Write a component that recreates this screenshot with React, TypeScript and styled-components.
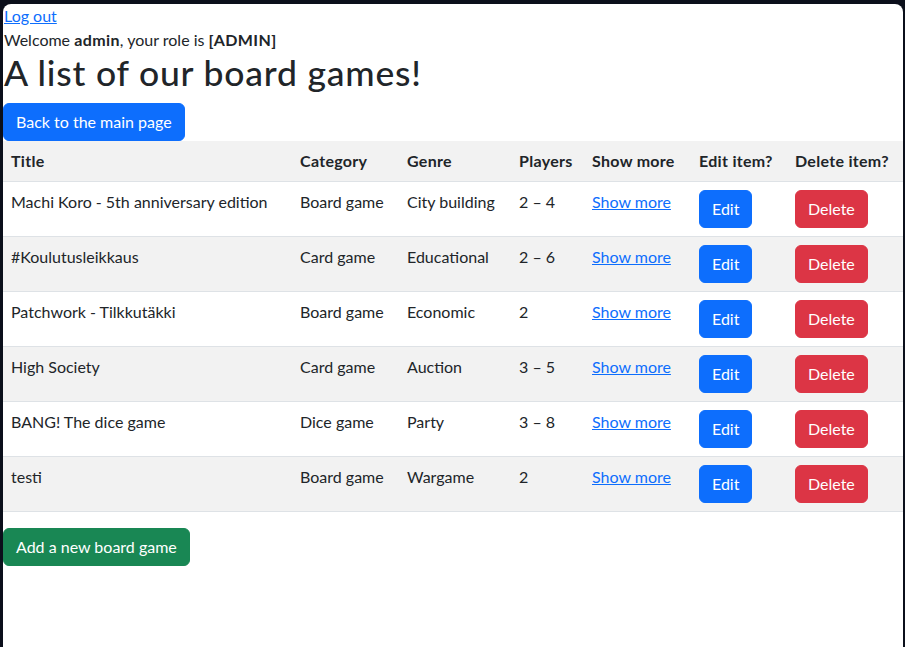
import React from "react";
import styled, { createGlobalStyle } from "styled-components";

const Global = createGlobalStyle`
  html, body { margin: 0; padding: 0; background: #0b0f1b; }
  body {
    font-family: Lato, "Noto Sans", sans-serif;
    font-size: 16px;
    line-height: 1.5;
    color: #212529;
  }
  * { box-sizing: border-box; }
`;

const Frame = styled.div`
  margin: 4px 2px 0 3px;
  min-height: 643px;
  background: #ffffff;
  border-radius: 8px 8px 0 0;
  overflow: hidden;
`;

const Top = styled.div`
  padding-left: 1px;
`;

const Link = styled.a`
  color: #0d6efd;
  text-decoration: underline;
  cursor: pointer;
`;

const Line = styled.div`
  margin: 0;
`;

const Strong = styled.b`
  font-weight: 700;
  letter-spacing: 0.4px;
`;

const Title = styled.h1`
  margin: 0 0 8px;
  font-size: 35.5px;
  font-weight: 500;
  line-height: 1.2;
  letter-spacing: 0.8px;
`;

const Button = styled.button<{ $variant: "primary" | "danger" | "success" }>`
  display: inline-block;
  font-family: inherit;
  font-size: 16px;
  line-height: 1.5;
  padding: 6px 12px;
  border: 1px solid transparent;
  border-radius: 6px;
  color: #fff;
  cursor: pointer;
  background: ${(p) =>
    p.$variant === "primary" ? "#0d6efd" : p.$variant === "danger" ? "#dc3545" : "#198754"};
  border-color: ${(p) =>
    p.$variant === "primary" ? "#0d6efd" : p.$variant === "danger" ? "#dc3545" : "#198754"};
`;

const Table = styled.table`
  width: 100%;
  border-collapse: collapse;
  table-layout: fixed;
  margin-bottom: 16px;
  vertical-align: top;
`;

const Row = styled.tr<{ $striped?: boolean }>`
  background: ${(p) => (p.$striped ? "#f2f2f2" : "#ffffff")};
  border-bottom: 1px solid #dee2e6;
`;

const Th = styled.th`
  text-align: left;
  padding: 8px;
  font-weight: 700;
  letter-spacing: 0.3px;
  vertical-align: bottom;
  white-space: nowrap;
`;

const Td = styled.td`
  padding: 8px;
  vertical-align: top;
  white-space: nowrap;
`;

const Bottom = styled.div`
  padding-left: 0;
`;

const cols = [289, 107, 112, 73, 107, 96, 116];

const games = [
  ["Machi Koro - 5th anniversary edition", "Board game", "City building", "2 – 4"],
  ["#Koulutusleikkaus", "Card game", "Educational", "2 – 6"],
  ["Patchwork - Tilkkutäkki", "Board game", "Economic", "2"],
  ["High Society", "Card game", "Auction", "3 – 5"],
  ["BANG! The dice game", "Dice game", "Party", "3 – 8"],
  ["testi", "Board game", "Wargame", "2"],
];

export default function App() {
  return (
    <>
      <Global />
      <Frame>
        <Top>
          <Link>Log out</Link>
          <Line>
            Welcome <Strong>admin</Strong>, your role is <Strong>[ADMIN]</Strong>
          </Line>
          <Title>A list of our board games!</Title>
        </Top>
        <Button $variant="primary">Back to the main page</Button>
        <Table>
          <colgroup>
            {cols.map((w, i) => (
              <col key={i} style={{ width: w }} />
            ))}
          </colgroup>
          <thead>
            <Row $striped>
              <Th>Title</Th>
              <Th>Category</Th>
              <Th>Genre</Th>
              <Th>Players</Th>
              <Th>Show more</Th>
              <Th>Edit item?</Th>
              <Th>Delete item?</Th>
            </Row>
          </thead>
          <tbody>
            {games.map((g, i) => (
              <Row key={i} $striped={i % 2 === 1}>
                <Td>{g[0]}</Td>
                <Td>{g[1]}</Td>
                <Td>{g[2]}</Td>
                <Td>{g[3]}</Td>
                <Td>
                  <Link>Show more</Link>
                </Td>
                <Td>
                  <Button $variant="primary">Edit</Button>
                </Td>
                <Td>
                  <Button $variant="danger">Delete</Button>
                </Td>
              </Row>
            ))}
          </tbody>
        </Table>
        <Bottom>
          <Button $variant="success">Add a new board game</Button>
        </Bottom>
      </Frame>
    </>
  );
}
